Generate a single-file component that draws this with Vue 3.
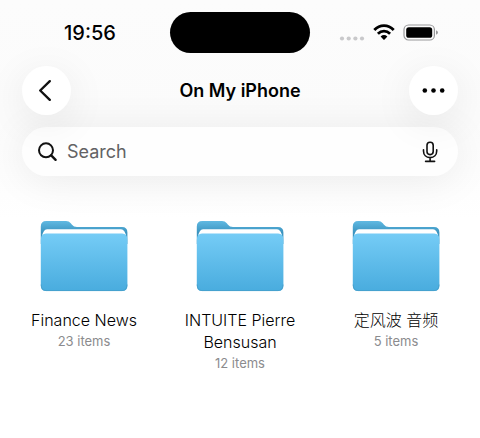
<script setup>
import { ref } from 'vue'

const query = ref('')
const folders = [
  { name: 'Finance News', count: 23 },
  { name: 'INTUITE Pierre Bensusan', count: 12 },
  { name: '定风波 音频', count: 5 },
]
</script>

<template>
  <div class="screen">
    <div class="status">
      <time class="clock">19:56</time>
      <div class="island"></div>
      <div class="indicators">
        <svg width="26" height="24" viewBox="0 0 26 24" aria-hidden="true">
          <g fill="#c9c9cb">
            <circle cx="3" cy="17.5" r="2.1" /><circle cx="9.7" cy="17.5" r="2.1" />
            <circle cx="16.4" cy="17.5" r="2.1" /><circle cx="23" cy="17.5" r="2.1" />
          </g>
        </svg>
        <svg width="22" height="24" viewBox="0 0 22 24" aria-hidden="true">
          <g fill="none" stroke="#000" stroke-width="2.8">
            <path d="M1.3 9 C6.8 3.2 15.2 3.2 20.7 9" />
            <path d="M4.9 12.8 C8.5 9.2 13.5 9.2 17.1 12.8" />
          </g>
          <path d="M7.6 15.5 Q11 12.6 14.4 15.5 L11.6 18.5 Q11 19.1 10.4 18.5 Z" />
        </svg>
        <svg width="36" height="24" viewBox="0 0 36 24" aria-hidden="true">
          <rect x="1" y="4" width="30.4" height="15" rx="4.6" fill="none" stroke="#98989a" stroke-width="1.2" />
          <rect x="3.2" y="6.2" width="26" height="10.6" rx="2.6" />
          <path d="M33 9.2 Q35 9.9 35 11.5 Q35 13.1 33 13.8 Z" fill="#98989a" />
        </svg>
      </div>
    </div>

    <header class="nav">
      <button class="round" type="button" aria-label="Back">
        <svg width="25" height="25" viewBox="0 0 25 25" aria-hidden="true">
          <path d="M15.8 3.2 L6.2 12.5 L15.8 21.8" fill="none" stroke="#111" stroke-width="2.4" stroke-linecap="round" stroke-linejoin="round" />
        </svg>
      </button>
      <h1>On My iPhone</h1>
      <button class="round" type="button" aria-label="More">
        <svg width="25" height="25" viewBox="0 0 25 25" aria-hidden="true">
          <circle cx="3.8" cy="12.5" r="2.3" /><circle cx="12.5" cy="12.5" r="2.3" /><circle cx="21.200" cy="12.5" r="2.3" />
        </svg>
      </button>
    </header>

    <div class="search">
      <svg width="20" height="20" viewBox="0 0 20 20" aria-hidden="true">
        <g fill="none" stroke="#111" stroke-linecap="round">
          <circle cx="8" cy="8.300" r="7" stroke-width="2" />
          <path d="M13.2 13.4 L17.6 17.8" stroke-width="2.4" />
        </g>
      </svg>
      <input v-model="query" type="text" placeholder="Search" aria-label="Search" />
      <button class="mic" type="button" aria-label="Dictate">
        <svg width="16" height="22" viewBox="0 0 16 22" fill="none" stroke="#111" stroke-width="1.6" stroke-linecap="round" aria-hidden="true">
          <rect x="5" y="1.2" width="6.2" height="12.4" rx="3" />
          <path d="M1.5 8.7 V10 C1.5 14 4.200 16.6 8.100 16.6 S14.700 14 14.700 10 V8.7 M8.100 16.6 V20.4 M3.6 20.4 H12.6" />
        </svg>
      </button>
    </div>

    <main class="grid">
      <a v-for="folder in folders" :key="folder.name" class="folder" href="#">
        <svg width="88" height="72" viewBox="0 0 88 72" aria-hidden="true">
          <defs>
            <linearGradient id="front" x1="0" y1="0" x2="0" y2="1">
              <stop offset="0" stop-color="#75ccf6" />
              <stop offset="1" stop-color="#49acde" />
            </linearGradient>
            <linearGradient id="back" x1="0" y1="0" x2="0" y2="1">
              <stop offset="0" stop-color="#60b9e2" />
              <stop offset="0.5" stop-color="#3b94c0" />
            </linearGradient>
          </defs>
          <path d="M0.8 24 V6.5 Q0.8 1 6.3 1 H26 Q29 1 30.8 3.2 L32 4.800 Q33.6 7 37 7 H82 Q87.4 7 87.4 12.5 V24 Z" fill="url(#back)" />
          <path d="M2 17 Q3.2 9.3 7 9.3 H81 Q85 9.3 86.2 17 Z" fill="#fff" />
          <path d="M0.8 20 Q0.8 13.5 6 13.5 H82.2 Q87.4 13.5 87.4 20 V65.5 Q87.4 71 82 71 H6.200 Q0.8 71 0.8 65.5 Z" fill="url(#front)" />
          <path d="M1.2 64.5 Q1.2 70.6 6.2 70.6 H82 Q87 70.6 87 64.5" fill="none" stroke="#459dc8" stroke-width="0.8" />
        </svg>
        <span class="name">{{ folder.name }}</span>
        <span class="count">{{ folder.count }} items</span>
      </a>
    </main>
  </div>
</template>

<style>
body {
  margin: 0;
  background: #fff;
}
</style>

<style scoped>
.screen {
  min-height: 100vh;
  background: linear-gradient(#fcfcfc 0, #fbfbfb 120px, #fff 220px);
  color: #000;
  font-family: Inter, "Noto Sans CJK SC", sans-serif;
}
.status {
  display: grid;
  grid-template-columns: 1fr 140px 1fr;
  align-items: center;
  padding-top: 12px;
}
.clock {
  justify-self: center;
  padding-left: 10px;
  font-size: 20px;
  font-weight: 500;
  line-height: 24px;
}
.island {
  height: 41px;
  border-radius: 21px;
  background: #000;
}
.indicators {
  display: flex;
  align-items: center;
  justify-content: flex-end;
  gap: 8px;
  padding-right: 41px;
}
.nav {
  display: flex;
  align-items: center;
  justify-content: space-between;
  padding: 13px 22px 0;
}
h1 {
  margin: 0;
  font-size: 18px;
  font-weight: 600;
  line-height: 24px;
}
button {
  display: flex;
  align-items: center;
  justify-content: center;
  padding: 0;
  border: 0;
  background: none;
}
.round {
  width: 49px;
  height: 49px;
  border-radius: 50%;
  background: #fff;
  box-shadow: 0 8px 40px rgba(0, 0, 0, 0.08);
}
.search {
  display: flex;
  align-items: center;
  gap: 9px;
  height: 49px;
  margin: 12px 22px 0;
  padding: 0 20px 0 16px;
  box-sizing: border-box;
  border-radius: 25px;
  background: #fefefe;
  box-shadow: 0 4px 40px rgba(0, 0, 0, 0.08);
}
input {
  flex: 1;
  min-width: 0;
  padding: 0;
  border: 0;
  outline: 0;
  background: none;
  color: #111;
  font-family: inherit;
  font-size: 18px;
  line-height: 24px;
}
input::placeholder {
  color: #626264;
  opacity: 1;
}
.grid {
  display: grid;
  grid-template-columns: repeat(3, 1fr);
  padding: 44px 6px 20px;
}
.folder {
  display: flex;
  flex-direction: column;
  align-items: center;
  padding: 0 16px;
  color: #000;
  text-align: center;
  text-decoration: none;
}
.name {
  margin-top: 17px;
  font-size: 16px;
  font-weight: 300;
  line-height: 22px;
}
.count {
  color: #8b8b8e;
  font-size: 13px;
  line-height: 21px;
}
</style>
